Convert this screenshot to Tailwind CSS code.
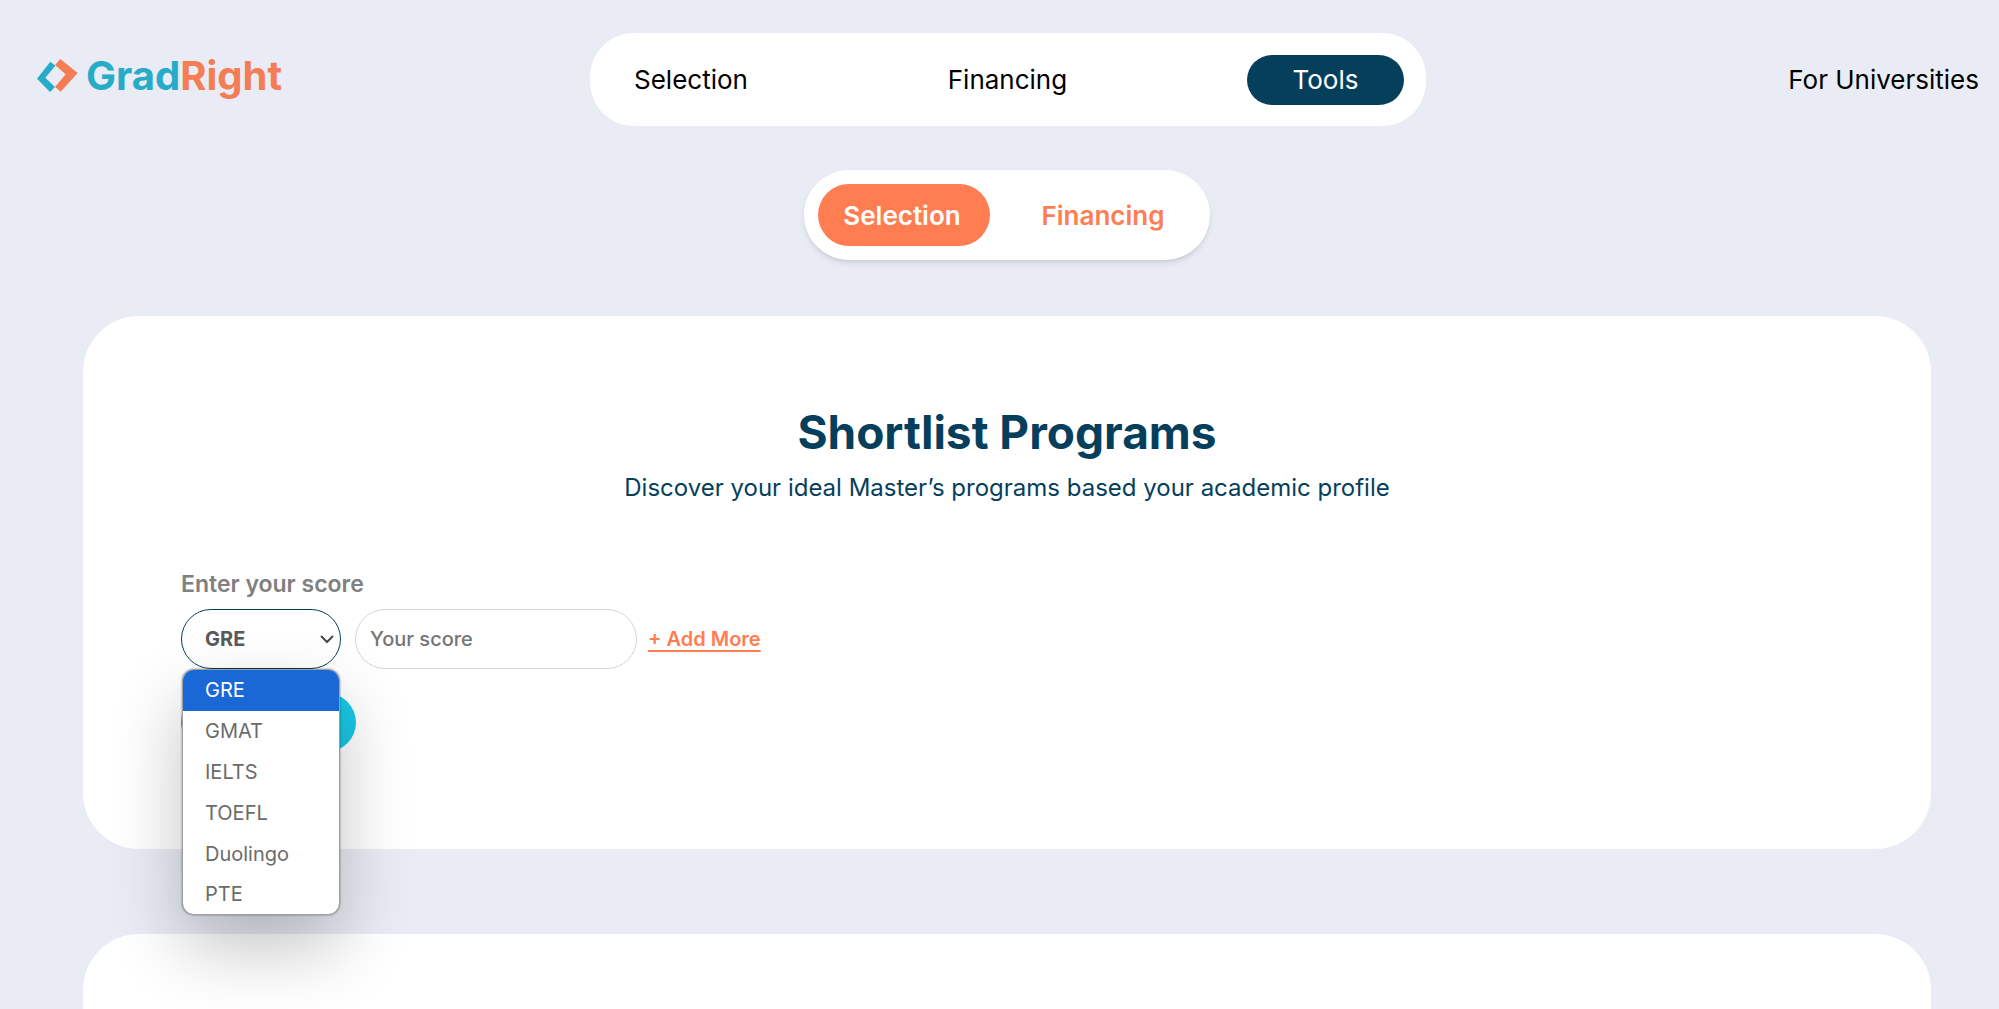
<!DOCTYPE html>
<html lang="en">
<head>
    <meta charset="UTF-8">
    <meta name="viewport" content="width=device-width, initial-scale=1.0">
    <title>GradRight - Shortlist Programs</title>
    <script src="https://cdn.jsdelivr.net/npm/@tailwindcss/browser@4"></script>
</head>
<body class="flex flex-col min-h-screen bg-[#e9ecf4] font-['Inter','Open_Sans',sans-serif]">
<div class="pl-[15px]">
    <!-- Header -->
    <header class="grid grid-cols-[1fr_auto_1fr] items-center pt-[33px] pl-[22px] pr-5">
        <a href="#" class="flex items-center gap-2 pb-2 text-[40px] leading-[48px] font-bold">
            <svg class="w-[41px] h-[33px]" viewBox="0 0 123 99">
                <path fill="#26abc8" d="M40 8 L55 20 L25 56 L54 84 L39 99 L0 59 Z"/>
                <path fill="#f47d55" d="M70 0 L122 42 L71 98 L54 84 L86 46 L54 18 Z"/>
            </svg>
            <span class="text-[#26abc8]">Grad<span class="text-[#f47d55]">Right</span></span>
        </a>
        <nav class="flex items-center justify-between w-[836px] h-[93px] rounded-[44px] bg-white pl-[44px] pr-[22px] text-[26px] text-black">
            <a href="#">Selection</a>
            <a href="#" class="pl-5">Financing</a>
            <a href="#" class="flex items-center justify-center w-[157px] h-[50px] rounded-full bg-[#063f5c] text-white">Tools</a>
        </nav>
        <a href="#" class="justify-self-end text-[26px] text-black">For Universities</a>
    </header>

    <!-- Selection / Financing switch -->
    <div class="flex justify-center mt-[44px]">
        <div class="flex items-center w-[406px] h-[90px] rounded-full bg-white px-[14px] shadow-md text-[26px] font-semibold">
            <button type="button" class="w-[172px] h-[62px] rounded-full bg-[#ff7d51] pr-1 text-white">Selection</button>
            <button type="button" class="flex-1 h-[62px] pl-5 text-[#ff7d51]">Financing</button>
        </div>
    </div>
</div>

<main class="flex flex-1 flex-col gap-[85px] pl-[83px] pr-[68px] mt-[56px]">
    <section class="bg-white rounded-[56px] px-[98px] pt-[88px] pb-[97px]">
        <h1 class="text-center text-[46px] leading-[56px] font-bold text-[#063f5c]">Shortlist Programs</h1>
        <p class="mt-[10px] text-center text-[24px] leading-9 text-[#063f5c]">Discover your ideal Master’s programs based your academic profile</p>

        <form class="mt-[62px]">
            <label for="exam" class="block text-[23px] leading-[33px] font-semibold text-[#808080]">Enter your score</label>
            <div class="mt-2 flex items-center">
                <div class="relative z-10">
                    <select id="exam" class="appearance-none block w-[160px] h-[60px] rounded-full border border-[#063f5c] bg-white pl-[23px] text-[20px] font-bold text-[#5a5a5a]">
                        <option>GRE</option>
                        <option>GMAT</option>
                        <option>IELTS</option>
                        <option>TOEFL</option>
                        <option>Duolingo</option>
                        <option>PTE</option>
                    </select>
                    <svg class="absolute right-[7px] top-[25px] w-[14px] h-[10px] pointer-events-none" viewBox="0 0 14 10" fill="none" stroke="#4a4a4a" stroke-width="2">
                        <path d="M1 2 L7 8 L13 2"/>
                    </svg>
                    <!-- open option list -->
                    <ul class="absolute left-px top-[60px] w-[158px] rounded-xl border border-[#a0a0a2] bg-white overflow-hidden text-[20px] text-[#6b6b6b] shadow-[0_0_2px_rgba(0,0,0,0.5),0_32px_70px_rgba(0,0,0,0.24)]">
                        <li class="pl-[22px] leading-[41px] bg-[#1a67d6] text-white">GRE</li>
                        <li class="pl-[22px] leading-[41px]">GMAT</li>
                        <li class="pl-[22px] leading-[41px]">IELTS</li>
                        <li class="pl-[22px] leading-[41px]">TOEFL</li>
                        <li class="pl-[22px] leading-[41px]">Duolingo</li>
                        <li class="pl-[22px] leading-[39px]">PTE</li>
                    </ul>
                </div>
                <input type="text" aria-label="Your score" placeholder="Your score" class="ml-[14px] w-[282px] h-[60px] rounded-full border border-[#d6d6d6] px-[14px] text-[20px] font-medium placeholder:text-[#757575]">
                <button type="button" class="ml-[11px] text-[20px] font-semibold text-[#ff7d51] underline underline-offset-4 decoration-2">+ Add More</button>
            </div>
            <button type="submit" aria-label="Submit" class="mt-6 block w-[175px] h-[59px] rounded-full bg-[#19c8e6]"></button>
        </form>
    </section>
    <section class="flex-1 bg-white rounded-t-[56px]"></section>
</main>
</body>
</html>
